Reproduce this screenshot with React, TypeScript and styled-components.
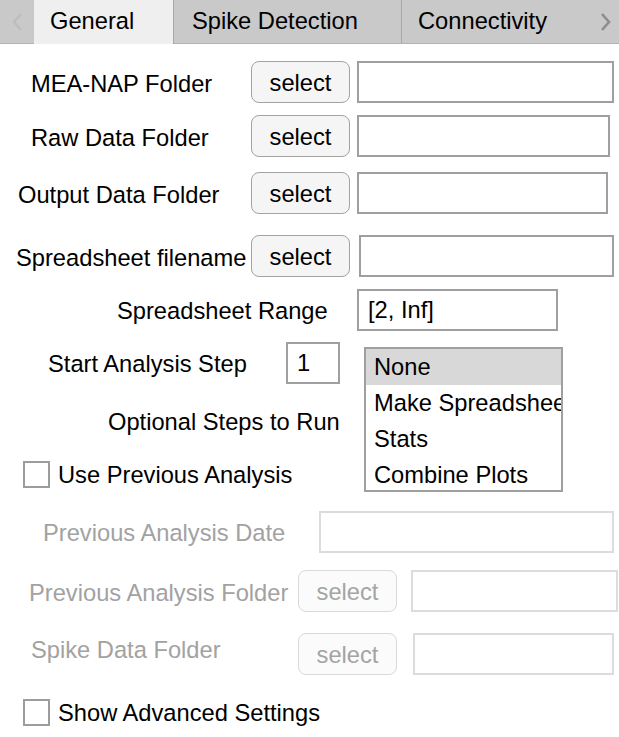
import React from "react";
import styled, { createGlobalStyle } from "styled-components";

const GlobalStyle = createGlobalStyle`
  html, body {
    margin: 0;
    padding: 0;
    background: #ffffff;
  }
  body {
    font-family: "Liberation Sans", Arial, Helvetica, sans-serif;
    color: #000;
  }
`;

const Page = styled.div`
  width: 619px;
  height: 737px;
  overflow: hidden;
  background: #ffffff;
  font-size: 23.7px;
`;

const TabBar = styled.div`
  display: flex;
  height: 44px;
  background: #c9c9c9;
  border-bottom: 1px solid #b4b4b4;
  box-sizing: border-box;
`;

const Arrow = styled.div<{ $width: number }>`
  width: ${(p) => p.$width}px;
  flex: none;
  display: flex;
  align-items: center;
  justify-content: center;
`;

const Tab = styled.div<{ $active?: boolean; $width: number; $pad: number; $last?: boolean }>`
  width: ${(p) => p.$width}px;
  flex: none;
  box-sizing: border-box;
  padding-left: ${(p) => p.$pad}px;
  display: flex;
  align-items: center;
  padding-bottom: 1px;
  background: ${(p) => (p.$active ? "#efefef" : "#c9c9c9")};
  border-right: ${(p) => (p.$last ? "none" : "1px solid #a7a7a7")};
  margin-bottom: ${(p) => (p.$active ? "-1px" : "0")};
  white-space: nowrap;
  overflow: hidden;
`;

const Form = styled.div`
  display: flex;
  flex-direction: column;
`;

const Row = styled.div<{ $top: number; $height?: number }>`
  display: flex;
  align-items: center;
  margin-top: ${(p) => p.$top}px;
  height: ${(p) => p.$height ?? 42}px;
`;

const Label = styled.div<{ $left: number; $width: number; $disabled?: boolean; $start?: boolean }>`
  flex: none;
  box-sizing: border-box;
  margin-left: ${(p) => p.$left}px;
  width: ${(p) => p.$width}px;
  white-space: nowrap;
  line-height: 27px;
  padding-top: 4px;
  align-self: ${(p) => (p.$start ? "flex-start" : "center")};
  color: ${(p) => (p.$disabled ? "#a2a2a2" : "#000")};
`;

const SelectButton = styled.button<{ $disabled?: boolean }>`
  flex: none;
  width: 99px;
  height: 42px;
  box-sizing: border-box;
  border-radius: 8px;
  border: 1.5px solid ${(p) => (p.$disabled ? "#d9d9d9" : "#a3a3a3")};
  background: ${(p) => (p.$disabled ? "#fbfbfb" : "#f5f5f5")};
  color: ${(p) => (p.$disabled ? "#a4a4a4" : "#000")};
  font-family: inherit;
  font-size: 23.7px;
  padding: 3px 0 0;
  cursor: default;
`;

const Field = styled.div<{ $gap: number; $width: number; $disabled?: boolean }>`
  flex: none;
  margin-left: ${(p) => p.$gap}px;
  width: ${(p) => p.$width}px;
  height: 42px;
  box-sizing: border-box;
  border: 2px solid ${(p) => (p.$disabled ? "#dcdcdc" : "#9f9f9f")};
  background: #fff;
  display: flex;
  align-items: center;
  padding-left: 9px;
  padding-top: 1px;
  white-space: nowrap;
`;

const Middle = styled.div`
  display: flex;
  margin-top: 12px;
`;

const LeftColumn = styled.div`
  width: 364px;
  flex: none;
  display: flex;
  flex-direction: column;
`;

const Listbox = styled.div`
  flex: none;
  width: 199px;
  height: 145px;
  margin-top: 5px;
  box-sizing: border-box;
  border: 2px solid #9f9f9f;
  overflow: hidden;
  background: #fff;
`;

const ListItem = styled.div<{ $selected?: boolean }>`
  height: 36px;
  line-height: 36px;
  padding-left: 8px;
  white-space: nowrap;
  overflow: hidden;
  background: ${(p) => (p.$selected ? "#d8d8d8" : "transparent")};
`;

const CheckRow = styled.div<{ $top: number }>`
  display: flex;
  align-items: center;
  margin-top: ${(p) => p.$top}px;
  margin-left: 23px;
  height: 27px;
  padding-top: 2px;
  line-height: 27px;
`;

const Box = styled.div`
  width: 27px;
  height: 27px;
  box-sizing: border-box;
  border: 2px solid #9c9c9c;
  background: #fff;
  margin-right: 8px;
  margin-top: -2px;
`;

const Chevron: React.FC<{ dir: "left" | "right"; color: string }> = ({ dir, color }) => (
  <svg width="12" height="20" viewBox="0 0 12 20">
    <polyline
      points={dir === "left" ? "10,2 3,10 10,18" : "2,2 9,10 2,18"}
      fill="none"
      stroke={color}
      strokeWidth="2.6"
    />
  </svg>
);

const App: React.FC = () => {
  return (
    <>
      <GlobalStyle />
      <Page>
        <TabBar>
          <Arrow $width={34}>
            <Chevron dir="left" color="#bdbdbd" />
          </Arrow>
          <Tab $active $width={140} $pad={16}>General</Tab>
          <Tab $width={228} $pad={18}>Spike Detection</Tab>
          <Tab $width={190} $pad={16} $last>Connectivity</Tab>
          <Arrow $width={27}>
            <Chevron dir="right" color="#8d8d8d" />
          </Arrow>
        </TabBar>

        <Form>
          <Row $top={17}>
            <Label $left={31} $width={220}>MEA-NAP Folder</Label>
            <SelectButton>select</SelectButton>
            <Field $gap={7} $width={257} />
          </Row>
          <Row $top={12}>
            <Label $left={31} $width={220}>Raw Data Folder</Label>
            <SelectButton>select</SelectButton>
            <Field $gap={7} $width={253} />
          </Row>
          <Row $top={15}>
            <Label $left={18} $width={233}>Output Data Folder</Label>
            <SelectButton>select</SelectButton>
            <Field $gap={7} $width={251} />
          </Row>
          <Row $top={21}>
            <Label $left={16} $width={235}>Spreadsheet filename</Label>
            <SelectButton>select</SelectButton>
            <Field $gap={9} $width={255} />
          </Row>
          <Row $top={12} $height={41}>
            <Label $left={117} $width={240}>Spreadsheet Range</Label>
            <Field $gap={0} $width={201}>[2, Inf]</Field>
          </Row>

          <Middle>
            <LeftColumn>
              <Row $top={0} $height={41}>
                <Label $left={48} $width={238}>Start Analysis Step</Label>
                <Field $gap={0} $width={54}>1</Field>
              </Row>
              <Row $top={24} $height={27}>
                <Label $left={108} $width={250}>Optional Steps to Run</Label>
              </Row>
              <CheckRow $top={26}>
                <Box />
                Use Previous Analysis
              </CheckRow>
            </LeftColumn>
            <Listbox>
              <ListItem $selected>None</ListItem>
              <ListItem>Make Spreadsheet</ListItem>
              <ListItem>Stats</ListItem>
              <ListItem>Combine Plots</ListItem>
            </Listbox>
          </Middle>

          <Row $top={19} $height={41}>
            <Label $left={43} $width={276} $disabled>Previous Analysis Date</Label>
            <Field $gap={0} $width={295} $disabled />
          </Row>
          <Row $top={18}>
            <Label $left={29} $width={269} $disabled>Previous Analysis Folder</Label>
            <SelectButton $disabled>select</SelectButton>
            <Field $gap={14} $width={207} $disabled />
          </Row>
          <Row $top={21}>
            <Label $left={31} $width={267} $disabled $start>Spike Data Folder</Label>
            <SelectButton $disabled>select</SelectButton>
            <Field $gap={16} $width={201} $disabled />
          </Row>

          <CheckRow $top={23}>
            <Box />
            Show Advanced Settings
          </CheckRow>
        </Form>
      </Page>
    </>
  );
};

export default App;
